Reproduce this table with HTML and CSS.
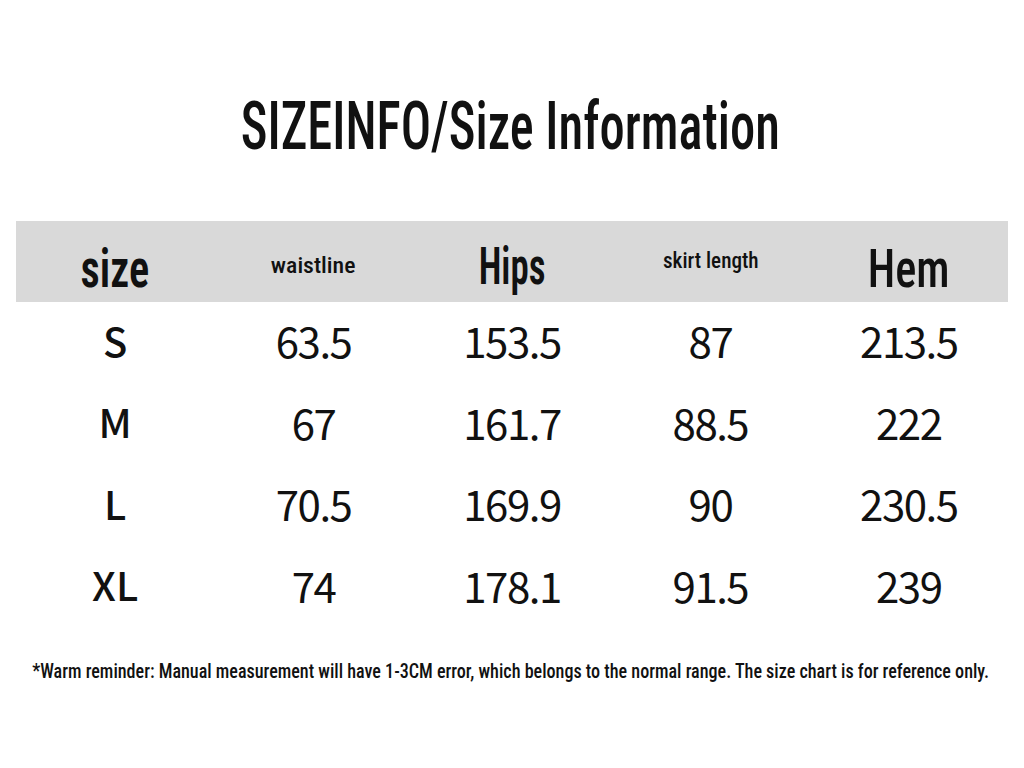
FILE: index.html
```html
<!DOCTYPE html>
<html>
<head>
<meta charset="utf-8">
<link rel="stylesheet" href="styles.css">
</head>
<body>
<div class="page">
  <header class="top">
    <h1 class="title"><span class="squeeze">SIZEINFO/Size Information</span></h1>
  </header>
  <div class="chart">
    <div class="head">
      <div class="hcell h-size"><span class="squeeze">size</span></div>
      <div class="hcell h-waist"><span class="squeeze">waistline</span></div>
      <div class="hcell h-hips"><span class="squeeze">Hips</span></div>
      <div class="hcell h-skirt"><span class="squeeze">skirt length</span></div>
      <div class="hcell h-hem"><span class="squeeze">Hem</span></div>
    </div>
    <div class="row"><div class="cell sz">S</div><div class="cell">63.5</div><div class="cell">153.5</div><div class="cell">87</div><div class="cell">213.5</div></div>
    <div class="row"><div class="cell sz">M</div><div class="cell">67</div><div class="cell">161.7</div><div class="cell">88.5</div><div class="cell">222</div></div>
    <div class="row"><div class="cell sz">L</div><div class="cell">70.5</div><div class="cell">169.9</div><div class="cell">90</div><div class="cell">230.5</div></div>
    <div class="row"><div class="cell sz">XL</div><div class="cell">74</div><div class="cell">178.1</div><div class="cell">91.5</div><div class="cell">239</div></div>
  </div>
  <p class="note"><span class="squeeze">*Warm reminder: Manual measurement will have 1-3CM error, which belongs to the normal range. The size chart is for reference only.</span></p>
</div>
</body>
</html>
```
FILE: styles.css
```css
html, body {
  margin: 0;
  padding: 0;
  background: #ffffff;
}
.page {
  width: 1024px;
  height: 768px;
  overflow: hidden;
  color: #111111;
}
.squeeze {
  display: inline-block;
  white-space: nowrap;
  transform-origin: center center;
}
.top {
  height: 221px;
  box-sizing: border-box;
  padding-top: 94px;
}
.title {
  margin: 0;
  display: flex;
  justify-content: center;
  padding-right: 3px;
  font-family: "Roboto Condensed", "Roboto", sans-serif;
  font-stretch: 75%;
  font-weight: 500;
  font-size: 66px;
  line-height: 1;
  color: #111111;
}
.title .squeeze { transform: scaleX(0.765); }
.chart {
  margin: 0 16px;
}
.head, .row {
  display: grid;
  grid-template-columns: repeat(5, 1fr);
}
.head {
  height: 81px;
  background: #d9d9d9;
  align-items: start;
}
.row {
  height: 81.5px;
  align-items: center;
}
.hcell {
  text-align: center;
  font-family: "Roboto Condensed", "Roboto", sans-serif;
  font-stretch: 75%;
  font-weight: 600;
  line-height: 1;
  color: #111111;
}
.h-size { font-size: 53px; padding-top: 22px; }
.h-size .squeeze { transform: scaleX(0.8); }
.h-hem { font-size: 53px; padding-top: 22px; font-weight: 500; }
.h-hem .squeeze { transform: scaleX(0.84); }
.h-hips { font-size: 52px; padding-top: 20px; }
.h-hips .squeeze { transform: scaleX(0.71); }
.h-waist { font-size: 22px; padding-top: 34px; font-weight: 500; }
.h-waist .squeeze { transform: scaleX(1.08); }
.h-skirt { font-size: 22px; padding-top: 29px; font-weight: 500; }
.h-skirt .squeeze { transform: scaleX(0.96); }
.cell {
  text-align: center;
  font-family: "Noto Sans CJK SC", "Noto Sans", sans-serif;
  font-size: 42px;
  font-weight: 400;
  letter-spacing: -1.5px;
  padding-bottom: 6px;
  color: #111111;
}
.cell.sz {
  font-weight: 500;
  font-size: 40px;
  letter-spacing: 0;
}
.note {
  margin: 33px 0 0;
  display: flex;
  justify-content: center;
  padding-right: 2px;
  font-family: "Roboto Condensed", "Roboto", sans-serif;
  font-stretch: 75%;
  font-weight: 500;
  font-size: 20px;
  line-height: 1;
  color: #111111;
}
.note .squeeze { transform: scaleX(0.905); }
```
